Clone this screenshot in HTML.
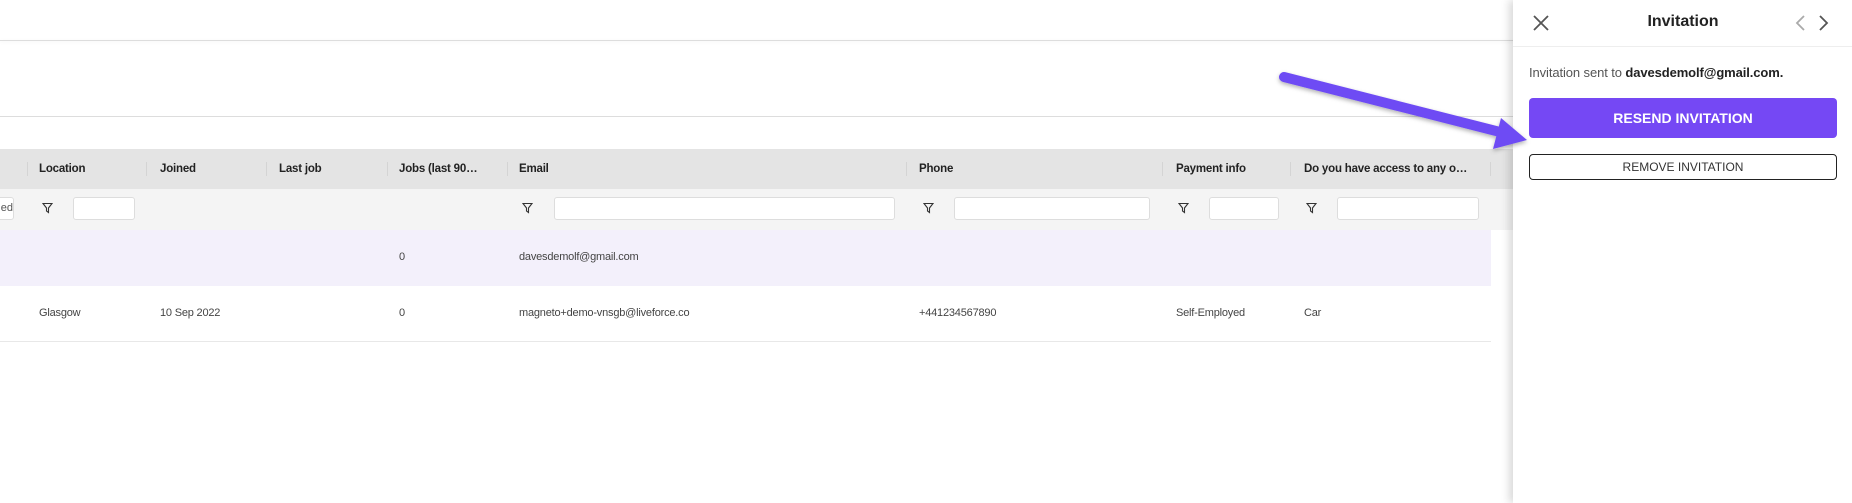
<!DOCTYPE html>
<html><head><meta charset="utf-8"><style>
*{box-sizing:border-box;margin:0;padding:0}
body{width:1852px;height:503px;overflow:hidden;background:#fff;font-family:"Liberation Sans",sans-serif;position:relative;color:#333}
.abs{position:absolute}
.hdrtxt{position:absolute;top:163px;font-size:11.5px;font-weight:bold;color:#222;letter-spacing:-0.2px}
.sep{position:absolute;top:162px;width:1px;height:14px;background:#d4d4d4}
.inp{position:absolute;top:197px;height:23px;background:#fff;border:1px solid #ddd;border-radius:3px}
.fil{position:absolute;top:202px}
.cell{position:absolute;font-size:11px;color:#444;letter-spacing:-0.2px}
</style></head><body>
<div class="abs" style="left:0;top:40px;width:1852px;height:1px;background:#ddd;box-shadow:0 1px 3px rgba(0,0,0,.08)"></div>
<div class="abs" style="left:0;top:116px;width:1852px;height:1px;background:#ddd"></div>
<div class="abs" style="left:0;top:149px;width:1520px;height:40px;background:#e4e4e4"></div>
<div class="abs" style="left:0;top:189px;width:1520px;height:41px;background:#f4f4f4"></div>
<div class="abs" style="left:0;top:230px;width:1491px;height:56px;background:#f3f0fb"></div>
<div class="abs" style="left:0;top:341px;width:1491px;height:1px;background:#e8e8e8"></div>

<div class="sep" style="left:27px"></div><div class="hdrtxt" style="left:39px">Location</div>
<div class="sep" style="left:146px"></div><div class="hdrtxt" style="left:160px">Joined</div>
<div class="sep" style="left:266px"></div><div class="hdrtxt" style="left:279px">Last job</div>
<div class="sep" style="left:387px"></div><div class="hdrtxt" style="left:399px">Jobs (last 90…</div>
<div class="sep" style="left:507px"></div><div class="hdrtxt" style="left:519px">Email</div>
<div class="sep" style="left:906px"></div><div class="hdrtxt" style="left:919px">Phone</div>
<div class="sep" style="left:1162px"></div><div class="hdrtxt" style="left:1176px">Payment info</div>
<div class="sep" style="left:1290px"></div><div class="hdrtxt" style="left:1304px">Do you have access to any o…</div>
<div class="sep" style="left:1490px"></div>

<div class="inp" style="left:-5px;width:19px;font-size:11px;padding:4px 0 0 0;color:#555;overflow:hidden;text-align:right">ed</div>
<svg class="fil" style="left:42px" width="11" height="12" viewBox="0 0 11 12"><path d="M1 1.5H10L6.5 6V10.5L4.5 9V6Z" fill="none" stroke="#333" stroke-width="1.1"/></svg>
<div class="inp" style="left:73px;width:62px"></div>
<svg class="fil" style="left:522px" width="11" height="12" viewBox="0 0 11 12"><path d="M1 1.5H10L6.5 6V10.5L4.5 9V6Z" fill="none" stroke="#333" stroke-width="1.1"/></svg>
<div class="inp" style="left:554px;width:341px"></div>
<svg class="fil" style="left:923px" width="11" height="12" viewBox="0 0 11 12"><path d="M1 1.5H10L6.5 6V10.5L4.5 9V6Z" fill="none" stroke="#333" stroke-width="1.1"/></svg>
<div class="inp" style="left:954px;width:196px"></div>
<svg class="fil" style="left:1178px" width="11" height="12" viewBox="0 0 11 12"><path d="M1 1.5H10L6.5 6V10.5L4.5 9V6Z" fill="none" stroke="#333" stroke-width="1.1"/></svg>
<div class="inp" style="left:1209px;width:70px"></div>
<svg class="fil" style="left:1306px" width="11" height="12" viewBox="0 0 11 12"><path d="M1 1.5H10L6.5 6V10.5L4.5 9V6Z" fill="none" stroke="#333" stroke-width="1.1"/></svg>
<div class="inp" style="left:1337px;width:142px"></div>

<div class="cell" style="left:399px;top:251px">0</div>
<div class="cell" style="left:519px;top:251px">davesdemolf@gmail.com</div>
<div class="cell" style="left:39px;top:307px">Glasgow</div>
<div class="cell" style="left:160px;top:307px">10 Sep 2022</div>
<div class="cell" style="left:399px;top:307px">0</div>
<div class="cell" style="left:519px;top:307px">magneto+demo-vnsgb@liveforce.co</div>
<div class="cell" style="left:919px;top:307px">+441234567890</div>
<div class="cell" style="left:1176px;top:307px">Self-Employed</div>
<div class="cell" style="left:1304px;top:307px">Car</div>

<!-- panel -->
<div class="abs" style="left:1513px;top:0;width:339px;height:503px;background:#fff;box-shadow:-4px 0 8px rgba(0,0,0,.15)"></div>
<div class="abs" style="left:1513px;top:46px;width:339px;height:1px;background:#eee"></div>
<svg class="abs" style="left:1532px;top:14px" width="18" height="18" viewBox="0 0 18 18"><path d="M2 2L16 16M16 2L2 16" stroke="#555" stroke-width="1.8"/></svg>
<div class="abs" style="left:1620px;top:13px;width:126px;text-align:center;font-size:16px;font-weight:bold;color:#222">Invitation</div>
<svg class="abs" style="left:1794px;top:14px" width="12" height="18" viewBox="0 0 12 18"><path d="M10 2L3 9L10 16" fill="none" stroke="#aaa" stroke-width="1.8"/></svg>
<svg class="abs" style="left:1818px;top:14px" width="12" height="18" viewBox="0 0 12 18"><path d="M2 2L9 9L2 16" fill="none" stroke="#555" stroke-width="1.8"/></svg>
<div class="abs" style="left:1529px;top:65px;font-size:13px;color:#555;white-space:nowrap;letter-spacing:-0.1px">Invitation sent to <b style="color:#222">davesdemolf@gmail.com.</b></div>
<div class="abs" style="left:1529px;top:98px;width:308px;height:40px;background:#7548f4;border-radius:4px;color:#fff;font-weight:bold;font-size:14px;text-align:center;line-height:40px">RESEND INVITATION</div>
<div class="abs" style="left:1529px;top:154px;width:308px;height:26px;border:1px solid #222;border-radius:4px;color:#333;font-size:12px;text-align:center;line-height:24px">REMOVE INVITATION</div>

<!-- arrow -->
<svg class="abs" style="left:0;top:0" width="1852" height="503">
<defs><filter id="sh" x="-10%" y="-50%" width="120%" height="200%"><feDropShadow dx="0" dy="2" stdDeviation="2" flood-opacity=".3"/></filter></defs>
<g filter="url(#sh)" fill="#6e4cf4">
<line x1="1284" y1="77" x2="1500" y2="132" stroke="#6e4cf4" stroke-width="10" stroke-linecap="round"/>
<path d="M1527 140L1501 118L1493 149Z"/>
</g>
</svg>
</body></html>
